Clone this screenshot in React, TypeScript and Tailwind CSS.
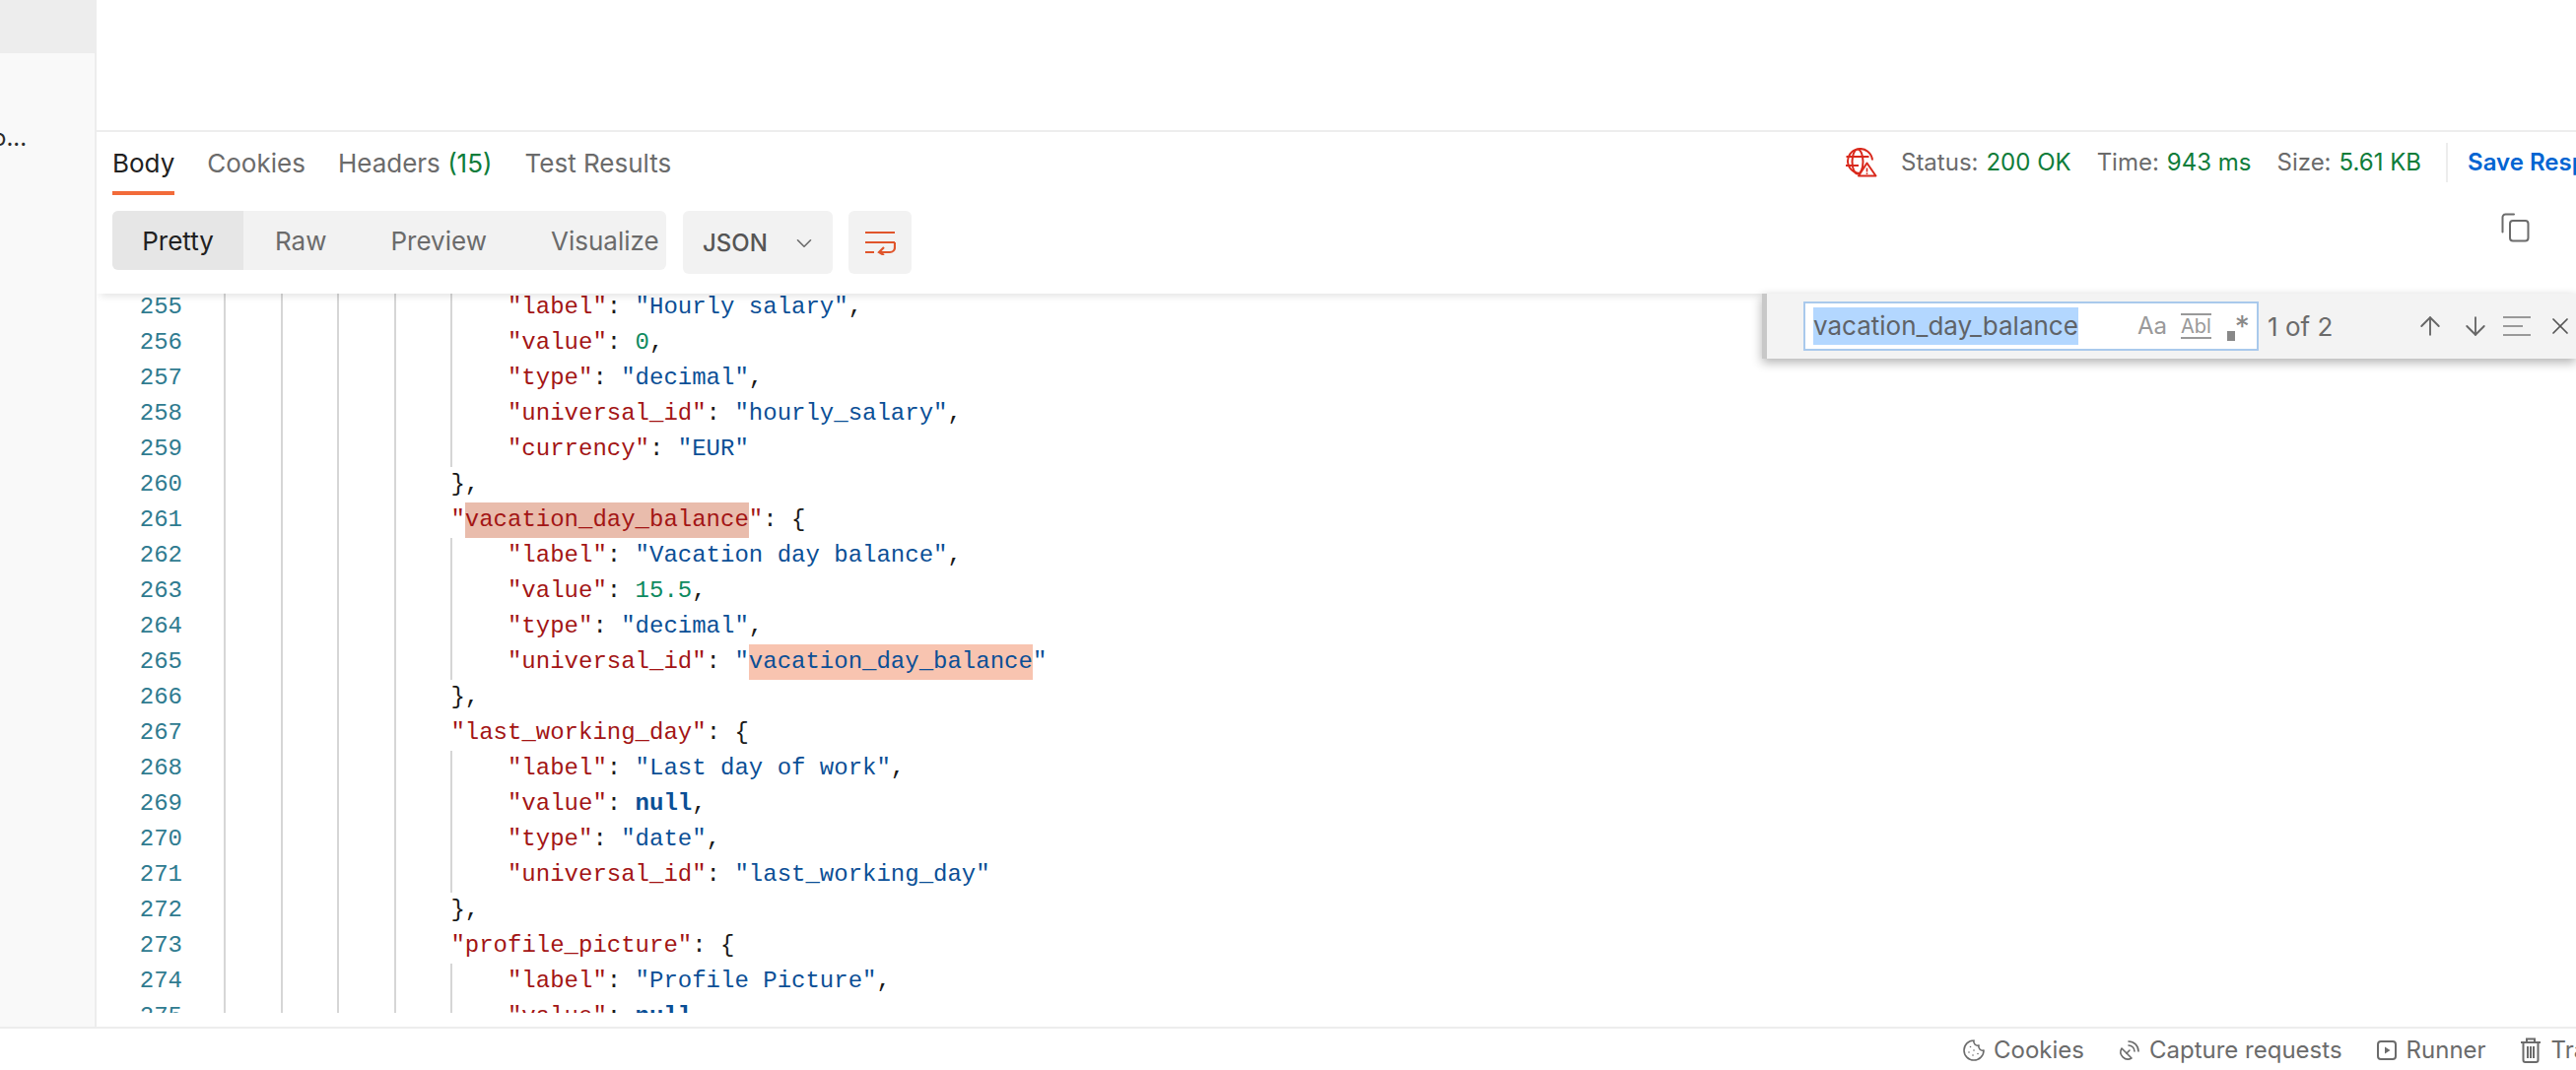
import React from "react";
import { Cookie, SatelliteDish, ChevronDown, ArrowUp, ArrowDown, X } from "lucide-react";

type Tok = [string, string];
const K = "text-[#a31515]";
const S = "text-[#0b4f96]";
const P = "text-[#1a1a1a]";
const N = "text-[#0e8a5f]";
const NL = "text-[#0b4f96] font-bold";

const prop = (k: string, v: Tok, comma = true): Tok[] => {
  const out: Tok[] = [[`"${k}"`, K], [": ", P], v];
  if (comma) out.push([",", P]);
  return out;
};
const str = (s: string): Tok => [`"${s}"`, S];

type Row = { n: number; depth: number; toks: React.ReactNode };
const line = (toks: Tok[]) => toks.map((t, i) => <span key={i} className={t[1]}>{t[0]}</span>);

const rows: Row[] = [
  { n: 255, depth: 5, toks: line(prop("label", str("Hourly salary"))) },
  { n: 256, depth: 5, toks: line(prop("value", ["0", N])) },
  { n: 257, depth: 5, toks: line(prop("type", str("decimal"))) },
  { n: 258, depth: 5, toks: line(prop("universal_id", str("hourly_salary"))) },
  { n: 259, depth: 5, toks: line(prop("currency", str("EUR"), false)) },
  { n: 260, depth: 4, toks: line([["},", P]]) },
  {
    n: 261, depth: 4, toks: (
      <>
        <span className={K}>"</span>
        <span className={`${K} inline-block h-9 bg-[#e9bcac]`}>vacation_day_balance</span>
        <span className={K}>"</span>
        <span className={P}>: {"{"}</span>
      </>
    ),
  },
  { n: 262, depth: 5, toks: line(prop("label", str("Vacation day balance"))) },
  { n: 263, depth: 5, toks: line(prop("value", ["15.5", N])) },
  { n: 264, depth: 5, toks: line(prop("type", str("decimal"))) },
  {
    n: 265, depth: 5, toks: (
      <>
        <span className={K}>"universal_id"</span>
        <span className={P}>: </span>
        <span className={S}>"</span>
        <span className={`${S} inline-block h-9 bg-[#f8c4b0]`}>vacation_day_balance</span>
        <span className={S}>"</span>
      </>
    ),
  },
  { n: 266, depth: 4, toks: line([["},", P]]) },
  { n: 267, depth: 4, toks: line([['"last_working_day"', K], [": {", P]]) },
  { n: 268, depth: 5, toks: line(prop("label", str("Last day of work"))) },
  { n: 269, depth: 5, toks: line(prop("value", ["null", NL])) },
  { n: 270, depth: 5, toks: line(prop("type", str("date"))) },
  { n: 271, depth: 5, toks: line(prop("universal_id", str("last_working_day"), false)) },
  { n: 272, depth: 4, toks: line([["},", P]]) },
  { n: 273, depth: 4, toks: line([['"profile_picture"', K], [": {", P]]) },
  { n: 274, depth: 5, toks: line(prop("label", str("Profile Picture"))) },
  { n: 275, depth: 5, toks: line(prop("value", ["null", NL])) },
];

function CodeRow({ r }: { r: Row }) {
  return (
    <div className="flex h-9 leading-9 whitespace-pre">
      <div className="w-[129px] shrink-0 pr-[42px] text-right text-[#2f7b90]">{r.n}</div>
      {Array.from({ length: r.depth }).map((_, i) => (
        <span key={i} className="w-[57.6px] shrink-0 border-l-2 border-[#d6d6d6]" />
      ))}
      <div className="-ml-0">{r.toks}</div>
    </div>
  );
}

function GlobeWarn() {
  return (
    <svg width="34" height="30" viewBox="0 0 34 30" fill="none" stroke="#d9291c" strokeWidth="2">
      <path d="M20 25.5a12.5 12.5 0 1 1 9-13" />
      <ellipse cx="14" cy="14" rx="5.5" ry="12.5" />
      <path d="M2.5 9h23M2 18h13" />
      <path d="M23.5 15.5 32.5 28.5H15z" strokeLinejoin="round" fill="#fff" />
      <path d="M23.5 20.5v4M23.5 25.5v1.5" strokeWidth="1.6" />
    </svg>
  );
}

function CopyIcon() {
  return (
    <svg width="30" height="30" viewBox="0 0 30 30" fill="none" stroke="#6b6b6b" strokeWidth="2">
      <path d="M13 1.5H4.5a3 3 0 0 0-3 3v15" strokeLinecap="round" />
      <rect x="9" y="8" width="18.5" height="20.5" rx="3" />
    </svg>
  );
}

function WrapIcon() {
  return (
    <svg width="32" height="26" viewBox="0 0 32 26" fill="none" stroke="#e0552b" strokeWidth="2.2">
      <path d="M1 3h30M1 13h30a0 0 0 0 1 0 0M1 23h9" />
      <path d="M31 13v5a5 5 0 0 1-5 5H15" />
      <path d="M20 18l-5 5 5 3" />
    </svg>
  );
}

function RunnerIcon() {
  return (
    <svg width="20" height="20" viewBox="0 0 20 20" fill="none" stroke="#6b6b6b" strokeWidth="2">
      <rect x="1" y="1" width="18" height="18" rx="3" />
      <path d="M8 6.5 13.5 10 8 13.5z" fill="#6b6b6b" stroke="none" />
    </svg>
  );
}

function TrashIcon() {
  return (
    <svg width="22" height="26" viewBox="0 0 22 26" fill="none" stroke="#6b6b6b" strokeWidth="2">
      <path d="M1 5h20M7 5V1.5h8V5M3.500 5v18a2 2 0 0 0 2 2h11a2 2 0 0 0 2-2V5M8 9v12M11 9v12M14 9v12" />
    </svg>
  );
}

export default function App() {
  return (
    <div className="flex h-[1086px] w-[2614px] flex-col overflow-hidden bg-white font-['Inter',sans-serif] text-[26px] text-[#6b6b6b]">
      <div className="flex min-h-0 flex-1">
        <aside className="w-[98px] shrink-0 border-r-2 border-[#ededed] bg-[#f9f9f9]">
          <div className="h-[54px] bg-[#ededed]" />
          <div className="mt-[68px] overflow-hidden text-[24px] leading-[36px] text-[#2b2b2b]">
            <span className="-ml-[8px] block">o...</span>
          </div>
        </aside>

        <main className="flex min-w-0 flex-1 flex-col overflow-hidden">
          <div className="h-[134px] shrink-0 border-b-2 border-[#ededed]" />

          <div className="flex h-[64px] shrink-0 pl-[16px]">
            <div className="flex w-[1757px] shrink-0 gap-[33px]">
              <div className="flex h-[64px] items-center border-b-4 border-[#f26b3a] pt-[2px] text-[#212121]">Body</div>
              <div className="flex h-[64px] items-center pb-[2px]">Cookies</div>
              <div className="flex h-[64px] items-center pb-[2px]">
                Headers&nbsp;<span className="text-[#0e7c3a]">(15)</span>
              </div>
              <div className="flex h-[64px] items-center pb-[2px]">Test Results</div>
            </div>
            <div className="flex h-[64px] shrink-0 items-center pb-[2px] text-[24px] whitespace-nowrap">
              <GlobeWarn />
              <span className="ml-[24px]">Status:</span>
              <span className="ml-[8px] text-[#0e7c3a]">200 OK</span>
              <span className="ml-[26px]">Time:</span>
              <span className="ml-[8px] text-[#0e7c3a]">943 ms</span>
              <span className="ml-[26px]">Size:</span>
              <span className="ml-[8px] text-[#0e7c3a]">5.61 KB</span>
              <span className="ml-[25px] h-[40px] w-[2px] bg-[#ededed]" />
              <span className="ml-[20px] font-semibold text-[#0265d2]">Save Response</span>
            </div>
          </div>

          <div className="relative z-10 flex h-[100px] shrink-0 items-start pl-[16px] pt-[16px] shadow-[0_6px_8px_-4px_rgba(0,0,0,0.12)]">
            <div className="flex h-[60px] w-[562px] items-center overflow-hidden rounded-[6px] bg-[#f2f2f2]">
              <div className="flex h-full w-[133px] items-center justify-center bg-[#e6e6e6] text-[#212121]">Pretty</div>
              <span className="ml-[32px]">Raw</span>
              <span className="ml-[65px]">Preview</span>
              <span className="ml-[65px]">Visualize</span>
            </div>
            <div className="ml-[17px] flex h-[64px] w-[152px] items-center rounded-[6px] bg-[#f2f2f2] pl-[20px] pt-[2px] text-[24px] font-medium text-[#555555]">
              JSON
              <ChevronDown size={26} strokeWidth={1.5} className="ml-[24px] text-[#6b6b6b]" />
            </div>
            <div className="ml-[16px] flex h-[64px] w-[64px] items-center justify-center rounded-[6px] bg-[#f2f2f2]">
              <WrapIcon />
            </div>
            <div className="ml-auto mr-[46px] mt-[2px]">
              <CopyIcon />
            </div>
          </div>

          <div className="relative min-h-0 flex-1">
            <div className="h-[730px] overflow-hidden font-['Liberation_Mono',monospace] text-[24px]">
              <div className="-mt-[4px] -ml-0">
                {rows.map((r) => (
                  <CodeRow key={r.n} r={r} />
                ))}
              </div>
            </div>

            <div className="absolute left-[1690px] right-0 top-0 z-20 flex h-[66px] items-center border-l-[5px] border-[#c8c8c8] bg-[#f3f3f3] pl-[37px] shadow-[0_4px_10px_rgba(0,0,0,0.3)]">
              <div className="flex h-[50px] w-[462px] shrink-0 items-center border-2 border-[#a9c9ec] bg-white pl-[8px]">
                <span className="bg-[#b3d7ff] text-[26px] leading-[38px] text-[#5f6368]">vacation_day_balance</span>
                <span className="ml-[60px] text-[24px] text-[#999]">Aa</span>
                <span className="ml-[14px] border-y-2 border-[#999] text-[20px] leading-[22px] text-[#999]">Abl</span>
                <span className="ml-[16px] flex items-start text-[#888]">
                  <span className="mt-[20px] h-[10px] w-[8px] bg-[#888]" />
                  <span className="text-[30px] leading-[30px]">*</span>
                </span>
              </div>
              <span className="ml-[9px] whitespace-nowrap">1 of 2</span>
              <ArrowUp size={30} strokeWidth={1.5} className="ml-[84px] shrink-0 text-[#666]" />
              <ArrowDown size={30} strokeWidth={1.5} className="ml-[16px] shrink-0 text-[#666]" />
              <svg width="30" height="26" viewBox="0 0 30 26" fill="none" stroke="#999" strokeWidth="2" className="ml-[13px] shrink-0">
                <path d="M0 4h28M0 13h20M0 22h28" />
              </svg>
              <X size={28} strokeWidth={1.5} className="ml-[14px] shrink-0 text-[#555]" />
            </div>
          </div>
        </main>
      </div>

      <footer className="flex h-[44px] shrink-0 items-center border-t-2 border-[#ededed] pl-[1991px] pt-[2px] text-[24px] whitespace-nowrap">
        <Cookie size={24} strokeWidth={1.6} className="shrink-0" />
        <span className="ml-[8px]">Cookies</span>
        <SatelliteDish size={24} strokeWidth={1.6} className="ml-[34px] shrink-0" />
        <span className="ml-[8px]">Capture requests</span>
        <span className="ml-[35px] shrink-0"><RunnerIcon /></span>
        <span className="ml-[10px]">Runner</span>
        <span className="ml-[34px] shrink-0"><TrashIcon /></span>
        <span className="ml-[10px]">Trash</span>
      </footer>
    </div>
  );
}
